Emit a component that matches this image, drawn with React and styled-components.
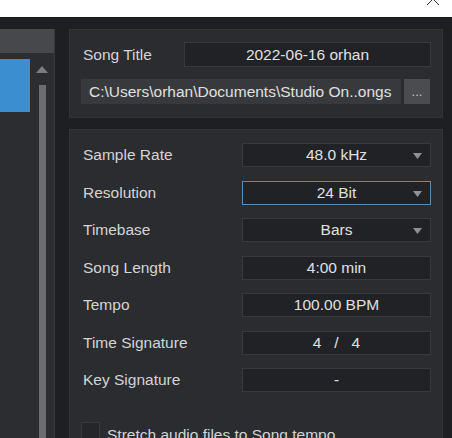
import React from 'react';
import styled, { createGlobalStyle } from 'styled-components';

const GlobalStyle = createGlobalStyle`
	body {
		margin: 0;
		background: #1e1f22;
		font-family: "Liberation Sans", Arial, sans-serif;
		overflow: hidden;
	}
`;

const rows = [
	{ label: 'Sample Rate', value: '48.0 kHz', dropdown: true },
	{ label: 'Resolution', value: '24 Bit', dropdown: true, focused: true },
	{ label: 'Timebase', value: 'Bars', dropdown: true },
	{ label: 'Song Length', value: '4:00 min' },
	{ label: 'Tempo', value: '100.00 BPM' },
	{ label: 'Time Signature', value: '4   /   4' },
	{ label: 'Key Signature', value: '-' },
];

export default function App() {
	return (
		<>
			<GlobalStyle />
			<TitleBar>
				<svg width='14' height='17' viewBox='0 0 14 17'>
					<path d='M1 -7 L13 5 M13 -7 L1 5' stroke='#333' strokeWidth='1' fill='none' />
				</svg>
			</TitleBar>
			<Main>
				<LeftPanel>
					<LeftHeader />
					<LeftBody>
						<Selection />
						<ScrollBar>
							<svg width='12' height='8' viewBox='0 0 12 8'>
								<path d='M6 0 L12 7 L0 7 Z' fill='#7b7c7f' />
							</svg>
							<Track />
						</ScrollBar>
					</LeftBody>
				</LeftPanel>

				<RightColumn>
					<Panel $pt='12px' $gap='12px'>
						<Row $h='25px'>
							<Label>Song Title</Label>
							<Field $width='247px' $h='25px'>2022-06-16 orhan</Field>
						</Row>
						<PathRow>
							<PathBox>C:\Users\orhan\Documents\Studio On..ongs</PathBox>
							<BrowseButton>...</BrowseButton>
						</PathRow>
					</Panel>

					<Panel $pt='13px' $gap='13.5px' $grow>
						{rows.map((r) => (
							<Row key={r.label}>
								<Label>{r.label}</Label>
								<Field $width='189px' $focused={r.focused}>
									<Value>{r.value}</Value>
									{r.dropdown && (
										<Arrow width='9' height='6' viewBox='0 0 9 6'>
											<path d='M0 0 L9 0 L4.5 6 Z' fill='#8f9093' />
										</Arrow>
									)}
								</Field>
							</Row>
						))}
						<CheckRow>
							<CheckBox />
							<CheckText>Stretch audio files to Song tempo</CheckText>
						</CheckRow>
					</Panel>
				</RightColumn>
			</Main>
		</>
	);
}

const TitleBar = styled.div`
	height: 17px;
	background: #ffffff;
	display: flex;
	justify-content: flex-end;
	padding-right: 12px;
	overflow: hidden;
`;

const Main = styled.div`
	height: 421px;
	display: flex;
	padding-top: 11px;
	box-sizing: border-box;
	gap: 14px;
	border-top: 1px solid #18191b;
`;

const LeftPanel = styled.div`
	width: 54px;
	display: flex;
	flex-direction: column;
	background: #2c2d30;
	border-right: 1px solid #38393c;
`;

const LeftHeader = styled.div`
	height: 24px;
	background: #46484b;
`;

const LeftBody = styled.div`
	flex: 1;
	display: flex;
	padding-top: 6px;
	gap: 6px;
`;

const Selection = styled.div`
	width: 30px;
	height: 53px;
	background: #3b8fd0;
`;

const ScrollBar = styled.div`
	width: 12px;
	display: flex;
	flex-direction: column;
	align-items: center;
	padding-top: 7px;
	gap: 11px;
`;

const Track = styled.div`
	width: 7px;
	flex: 1;
	background: #6c6d70;
`;

const RightColumn = styled.div`
	width: 374px;
	display: flex;
	flex-direction: column;
	gap: 11px;
`;

const Panel = styled.div`
	background: #2b2c2f;
	border: 1px solid #323336;
	box-sizing: border-box;
	display: flex;
	flex-direction: column;
	gap: ${(p) => p.$gap};
	padding: ${(p) => p.$pt} 11px 11px 11px;
	flex: ${(p) => (p.$grow ? 1 : 'none')};
	height: ${(p) => (p.$grow ? 'auto' : '89px')};
`;

const Row = styled.div`
	display: flex;
	align-items: center;
	justify-content: space-between;
	height: ${(p) => p.$h || '24px'};
`;

const Label = styled.div`
	padding-left: 2px;
	color: #d4d4d4;
	font-size: 15.5px;
`;

const Field = styled.div`
	width: ${(p) => p.$width};
	height: ${(p) => p.$h || '24px'};
	box-sizing: border-box;
	background: #212225;
	border: 1px solid ${(p) => (p.$focused ? '#5b8bb3' : '#38393c')};
	color: #e0e0e0;
	font-size: 15.5px;
	display: flex;
	align-items: center;
	justify-content: center;
	position: relative;
`;

const Value = styled.span`
	white-space: pre;
`;

const Arrow = styled.svg`
	position: absolute;
	right: 8px;
	top: 9px;
`;

const PathRow = styled.div`
	display: flex;
	gap: 3px;
	height: 25px;
`;

const PathBox = styled.div`
	width: 320px;
	background: #38393c;
	color: #e0e0e0;
	font-size: 15.5px;
	display: flex;
	align-items: center;
	padding-left: 8px;
	box-sizing: border-box;
	white-space: nowrap;
	overflow: hidden;
`;

const BrowseButton = styled.div`
	width: 26px;
	background: #4b4c50;
	color: #c8c8c8;
	font-size: 13px;
	display: flex;
	align-items: center;
	justify-content: center;
`;

const CheckRow = styled.div`
	display: flex;
	align-items: center;
	gap: 7px;
	margin-top: 14px;
`;

const CheckBox = styled.div`
	width: 19px;
	height: 19px;
	box-sizing: border-box;
	background: #252629;
	border: 1px solid #38393c;
	flex: none;
`;

const CheckText = styled.div`
	color: #d4d4d4;
	font-size: 15.5px;
	padding-top: 6px;
	white-space: nowrap;
`;
